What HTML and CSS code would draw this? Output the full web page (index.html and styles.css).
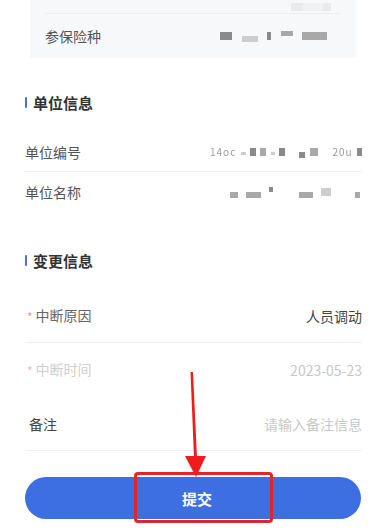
FILE: index.html
```html
<!DOCTYPE html>
<html lang="zh">
<head>
<meta charset="utf-8">
<link rel="stylesheet" href="styles.css">
</head>
<body>
<div class="page">
  <div class="card">
    <div class="card-top">
      <div class="mosaic m-top"><i class="b w12 g2"></i><i class="b w20 g3"></i><i class="b w8 g2"></i></div>
    </div>
    <div class="card-row">
      <span class="label">参保险种</span>
      <div class="mosaic mw107">
        <i class="b w12 g1"></i><i class="b w16 g3 low"></i><i class="b w4 g1"></i><i class="b w12 g2 high"></i><i class="b w25 g2"></i>
      </div>
    </div>
  </div>

  <div class="section-title t1"><span class="bar"></span>单位信息</div>
  <div class="row r1 divided">
    <span class="label">单位编号</span>
    <div class="mosaic mw152">
      <span class="faint">14oc</span><i class="b w5 g3 thin"></i><i class="b w6 g1"></i><i class="b w6 g2"></i><i class="b w4 g3 thin"></i><i class="b w6 g1"></i><i class="gap6"></i><i class="b w6 g1 low"></i><i class="b w8 g2"></i><i class="gap6"></i><span class="faint">20u</span><i class="b w5 g1"></i>
    </div>
  </div>
  <div class="row r2">
    <span class="label">单位名称</span>
    <div class="mosaic mw132">
      <i class="b w8 g2 low"></i><i class="b w15 g2 low"></i><i class="b w4 g1 high"></i><i class="gap10"></i><i class="b w14 g2 low"></i><i class="b w10 g3"></i><i class="gap8"></i><i class="b w5 g2 low"></i>
    </div>
  </div>

  <div class="section-title t2"><span class="bar"></span>变更信息</div>
  <div class="row r3 divided">
    <span class="label req">中断原因</span>
    <span class="value">人员调动</span>
  </div>
  <div class="row r3">
    <span class="label req dim">中断时间</span>
    <span class="value dim">2023-05-23</span>
  </div>
  <div class="row r3 divided">
    <span class="label note">备注</span>
    <span class="value dim">请输入备注信息</span>
  </div>

  <div class="btn-wrap">
    <div class="btn">提交</div>
  </div>

  <div class="red-box"></div>
  <svg class="arrow" width="40" height="120" viewBox="0 0 40 120">
    <polygon points="10.5,2 13,2 17,88 14,88" fill="#f01c1c"/>
    <polygon points="5,86 26,86 16,107" fill="#f01c1c"/>
  </svg>
</div>
</body>
</html>
```

FILE: styles.css
```css
* { box-sizing: border-box; margin: 0; padding: 0; }
html, body { background: #fff; }
body {
  width: 384px;
  height: 531px;
  overflow: hidden;
  font-family: "Noto Sans CJK SC", "Noto Sans", sans-serif;
  color: #444;
}
.page { position: relative; width: 384px; height: 531px; }

.card {
  margin: 0 28px 0 30px;
  background: #f7f8fa;
  padding: 0 15px;
}
.card-top {
  height: 14px;
  border-bottom: 1px solid #eceef1;
  display: flex;
  justify-content: flex-end;
  align-items: flex-start;
}
.m-top { opacity: .15; height: 3px; overflow: hidden; margin-right: 10px; }
.card-row {
  height: 44px;
  display: flex;
  align-items: center;
  justify-content: space-between;
  padding-right: 14px;
}

.label { font-size: 14px; color: #555; line-height: 20px; }
.value { font-size: 14px; color: #444; line-height: 20px; }
.dim { color: #c8c8c8; }
.req::before { content: "*"; color: #e89a9a; font-size: 12px; margin-right: 3px; vertical-align: -1px; }
.req { margin-left: 2px; color: #666; }
.req.dim { color: #cfcfcf; }
.req.dim::before { color: #f0b8b8; }
.note { margin-left: 4px; color: #444; }

.section-title {
  display: flex;
  align-items: center;
  height: 24px;
  margin-left: 25px;
  font-size: 15px;
  font-weight: 700;
  color: #333;
}
.t1 { margin-top: 32px; }
.t2 { margin-top: 36px; }
.bar {
  width: 2px;
  height: 11px;
  background: #4b73d4;
  border-radius: 1px;
  margin-right: 6px;
}

.row {
  margin: 0 22px 0 25px;
  display: flex;
  align-items: center;
  justify-content: space-between;
}
.divided { border-bottom: 1px solid #eff0f2; }
.r1 { margin-top: 18px; height: 40px; }
.r2 { height: 40px; }
.r3 { height: 54px; }
.t2 + .row { margin-top: 17px; }

.mosaic { display: flex; align-items: center; height: 14px; justify-content: space-between; }
.mw107 { width: 107px; }
.mw152 { width: 152px; }
.mw132 { width: 130px; margin-right: 2px; }
.faint { font-size: 10px; color: #9a9a9a; letter-spacing: 1px; filter: blur(.3px); }
.b { display: block; height: 8px; filter: blur(.4px); }
.thin { height: 3px; margin-top: 4px; }
.low { margin-top: 6px; height: 6px; }
.high { margin-top: -6px; height: 5px; }
.g1 { background: #8a8a8a; }
.g2 { background: #a8a8a8; }
.g3 { background: #cdcdcd; }
.w4 { width: 4px; } .w5 { width: 5px; } .w6 { width: 6px; } .w7 { width: 7px; }
.w8 { width: 8px; } .w9 { width: 9px; } .w10 { width: 10px; } .w12 { width: 12px; }
.w14 { width: 14px; } .w15 { width: 15px; } .w16 { width: 16px; } .w20 { width: 20px; } .w25 { width: 25px; }
.gap6 { display: block; width: 6px; } .gap8 { display: block; width: 8px; }
.gap10 { display: block; width: 10px; }

.btn-wrap { margin: 26px 23px 0 25px; }
.btn {
  height: 42px;
  border-radius: 21px;
  background: #3d6fe3;
  color: #fff;
  font-size: 15px;
  font-weight: 700;
  display: flex;
  align-items: center;
  justify-content: center;
  padding-left: 8px;
}

.red-box {
  position: absolute;
  left: 134px;
  top: 472px;
  width: 139px;
  height: 51px;
  border: 3px solid #e0262b;
  border-radius: 4px;
}
.arrow {
  position: absolute;
  left: 180px;
  top: 370px;
}
```
